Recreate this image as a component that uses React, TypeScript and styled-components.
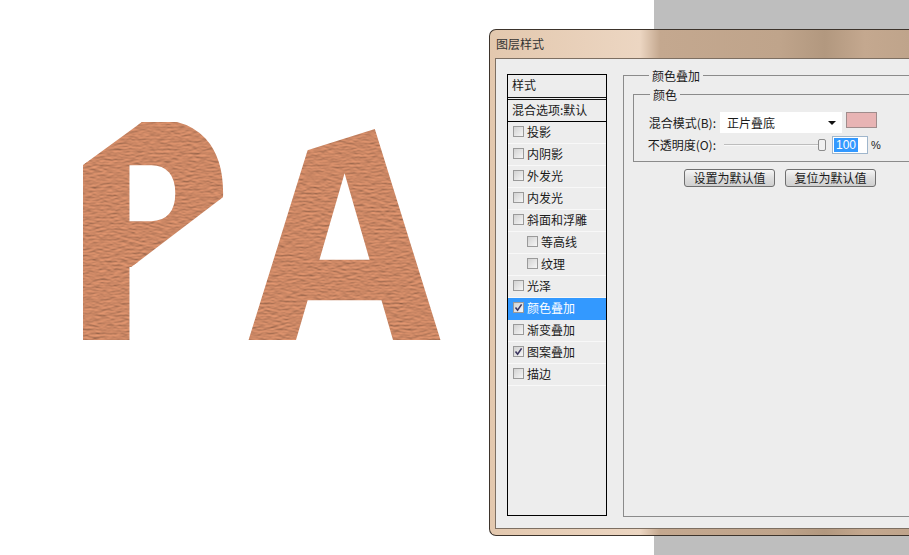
import React from 'react';
import styled, { createGlobalStyle } from 'styled-components';

type LayerStyle = {
  label: string;
  indent?: boolean;
  checked?: boolean;
  active?: boolean;
};

const layerStyles: LayerStyle[] = [
  { label: '投影' },
  { label: '内阴影' },
  { label: '外发光' },
  { label: '内发光' },
  { label: '斜面和浮雕' },
  { label: '等高线', indent: true },
  { label: '纹理', indent: true },
  { label: '光泽' },
  { label: '颜色叠加', checked: true, active: true },
  { label: '渐变叠加' },
  { label: '图案叠加', checked: true },
  { label: '描边' },
];

const GlobalStyle = createGlobalStyle`
  html, body {
    margin: 0;
    padding: 0;
    height: 100%;
    overflow: hidden;
  }
`;

const Page = styled.div`
  display: flex;
  width: 909px;
  height: 555px;
  overflow: hidden;
  background: linear-gradient(to right, #fff 654px, #bebebe 654px);
  font-family: 'Noto Sans CJK SC', 'Liberation Sans', sans-serif;
  font-size: 12px;
  color: #1a1a1a;
`;

const Artwork = styled.svg`
  flex: 0 0 489px;
  width: 489px;
  height: 555px;
  background: #fff;
`;

const BigLetter = styled.text<{ $weight?: number }>`
  font-family: 'DejaVu Sans', sans-serif;
  font-weight: 700;
  font-size: 299px;
  fill: #000;
  stroke: #000;
  stroke-width: ${(p) => p.$weight ?? 0}px;
`;

const Dialog = styled.div`
  flex: 0 0 440px;
  display: flex;
  flex-direction: column;
  height: 507px;
  margin-top: 29px;
  box-sizing: border-box;
  border: 1px solid #3d342c;
  border-right: 0;
  border-radius: 7px 0 0 7px;
  background: linear-gradient(
    to right,
    #e3c8ae 0,
    #ecd6c2 150px,
    #c4a88f 170px,
    #bfa48b 290px,
    #b2987f 335px,
    #c4a88f 375px,
    #bfa48b 420px
  );
`;

const TitleBar = styled.div`
  flex: 0 0 28px;
  display: flex;
  align-items: center;
  box-sizing: border-box;
  padding: 0 0 2px 6px;
  color: #333;
`;

const DialogBody = styled.div`
  flex: 1;
  display: flex;
  align-items: flex-start;
  gap: 16px;
  margin: 0 0 6px 5px;
  padding: 8px 0 0 11px;
  border: 1px solid #7d6f62;
  border-right: 0;
  background: #ededed;
  overflow: hidden;
`;

const StyleList = styled.div`
  flex: 0 0 100px;
  box-sizing: border-box;
  height: 442px;
  margin-top: 7px;
  border: 1px solid #000;
`;

const ListHeader = styled.div`
  box-sizing: border-box;
  height: 25px;
  padding-left: 4px;
  line-height: 20px;
  border-bottom: 3px double #111;
`;

const BlendRow = styled.div`
  box-sizing: border-box;
  height: 22px;
  padding-left: 4px;
  line-height: 20px;
  white-space: nowrap;
  border-bottom: 1px solid #000;
`;

const StyleRow = styled.div<{ $indent?: boolean; $active?: boolean }>`
  box-sizing: border-box;
  display: flex;
  align-items: center;
  gap: 3px;
  height: 22px;
  padding: 0 0 2px ${(p) => (p.$indent ? 19 : 5)}px;
  border-bottom: 1px solid ${(p) => (p.$active ? '#3399ff' : '#f8f8f8')};
  background: ${(p) => (p.$active ? '#3399ff' : 'transparent')};
  color: ${(p) => (p.$active ? '#fff' : '#1a1a1a')};
`;

const CheckBox = styled.span`
  flex: 0 0 11px;
  display: flex;
  align-items: center;
  justify-content: center;
  box-sizing: border-box;
  width: 11px;
  height: 11px;
  border: 1px solid #9a9a9a;
  background: linear-gradient(135deg, #d2d2d2, #f6f6f6);
`;

const Group = styled.fieldset<{ $width: number }>`
  box-sizing: border-box;
  width: ${(p) => p.$width}px;
  min-width: 0;
  margin: 0;
  border: 1px solid #8b8b8b;
  border-right: 0;
`;

const OuterGroup = styled(Group)`
  flex: 0 0 auto;
  height: 450px;
  padding: 3px 0 0 9px;
`;

const InnerGroup = styled(Group)`
  height: 76px;
  padding: 10px 0 0 0;
`;

const GroupTitle = styled.legend`
  margin-left: 16px;
  padding: 0 3px;
  height: 16px;
  line-height: 18px;
`;

const FormRow = styled.div<{ $height: number }>`
  display: flex;
  align-items: center;
  height: ${(p) => p.$height}px;
  margin-bottom: 2px;
`;

const FieldLabel = styled.span`
  flex: 0 0 82px;
  text-align: right;
  white-space: nowrap;
  margin-right: 4px;
`;

const SelectBox = styled.div`
  display: flex;
  align-items: center;
  justify-content: space-between;
  box-sizing: border-box;
  width: 122px;
  height: 21px;
  padding: 0 6px 0 7px;
  background: #fff;
`;

const SelectArrow = styled.span`
  width: 0;
  height: 0;
  border-left: 4px solid transparent;
  border-right: 4px solid transparent;
  border-top: 4px solid #111;
`;

const Swatch = styled.span`
  align-self: flex-start;
  box-sizing: border-box;
  width: 31px;
  height: 16px;
  margin-left: 4px;
  border: 1px solid #a08c8c;
  background: #e8b4b4;
`;

const SliderTrack = styled.div`
  position: relative;
  flex: 0 0 102px;
  height: 2px;
  margin: 0 6px 0 4px;
  background: linear-gradient(#bdbdbd 50%, #f8f8f8 50%);
`;

const SliderThumb = styled.span`
  position: absolute;
  right: 0;
  top: -5px;
  box-sizing: border-box;
  width: 8px;
  height: 12px;
  border: 1px solid #8c8c8c;
  border-radius: 2px;
  background: #f0f0f0;
`;

const NumberBox = styled.div`
  box-sizing: border-box;
  width: 36px;
  height: 18px;
  padding: 1px 0 0 1px;
  border: 1px solid #9fb6cc;
  background: #fff;
  font-family: 'Liberation Sans', sans-serif;
  line-height: 14px;
`;

const Selected = styled.span`
  display: inline-block;
  padding: 0 2px;
  background: #3399ff;
  color: #fff;
`;

const Percent = styled.span`
  margin-left: 3px;
  font-family: 'Liberation Sans', sans-serif;
  font-size: 11px;
`;

const ButtonRow = styled.div`
  display: flex;
  gap: 10px;
  margin: 7px 0 0 51px;
`;

const DefaultButton = styled.button`
  box-sizing: border-box;
  width: 91px;
  height: 18px;
  padding: 0;
  border: 1px solid #6f6f6f;
  border-radius: 3px;
  background: linear-gradient(#f6f6f6, #dedede 50%, #cfcfcf);
  font: inherit;
  line-height: 14px;
  color: #1a1a1a;
`;

const CheckMark = () => (
  <svg width="9" height="9" viewBox="0 0 9 9">
    <path d="M1.5 4.5 L3.6 7.2 L7.6 1.4" fill="none" stroke="#3b3560" strokeWidth="1.6" />
  </svg>
);

const PaperLetters = () => (
  <Artwork viewBox="0 0 489 555">
    <defs>
      <filter
        id="paper"
        filterUnits="userSpaceOnUse"
        x="0"
        y="0"
        width="489"
        height="555"
        colorInterpolationFilters="sRGB"
      >
        <feTurbulence type="fractalNoise" baseFrequency="0.14 0.5" numOctaves="4" seed="11" result="grain" />
        <feDiffuseLighting in="grain" surfaceScale="0.6" lightingColor="#eb9c74" result="lit">
          <feDistantLight azimuth="90" elevation="60" />
        </feDiffuseLighting>
        <feComposite in="lit" in2="SourceAlpha" operator="in" />
      </filter>
      <clipPath id="cut-p">
        <polygon points="83,165 142,122 260,122 260,169 130,268 130,340 83,340" />
      </clipPath>
      <clipPath id="cut-a">
        <polygon points="240,340 240,169 305,151 378,128 450,110 450,340" />
      </clipPath>
    </defs>
    <g filter="url(#paper)">
      <g clipPath="url(#cut-p)">
        <BigLetter transform="translate(83 340) scale(0.76 1)" x="-25" y="0" $weight={5}>
          P
        </BigLetter>
      </g>
      <g clipPath="url(#cut-a)">
        <BigLetter transform="translate(249 340) scale(0.84 1)" x="-2" y="0">
          A
        </BigLetter>
      </g>
    </g>
  </Artwork>
);

const App: React.FC = () => {
  return (
    <Page>
      <GlobalStyle />
      <PaperLetters />
      <Dialog>
        <TitleBar>图层样式</TitleBar>
        <DialogBody>
          <StyleList>
            <ListHeader>样式</ListHeader>
            <BlendRow>混合选项:默认</BlendRow>
            {layerStyles.map((item) => (
              <StyleRow key={item.label} $indent={item.indent} $active={item.active}>
                <CheckBox>{item.checked && <CheckMark />}</CheckBox>
                {item.label}
              </StyleRow>
            ))}
          </StyleList>
          <OuterGroup $width={330}>
            <GroupTitle>颜色叠加</GroupTitle>
            <InnerGroup $width={320}>
              <GroupTitle>颜色</GroupTitle>
              <FormRow $height={21}>
                <FieldLabel>混合模式(B):</FieldLabel>
                <SelectBox>
                  正片叠底
                  <SelectArrow />
                </SelectBox>
                <Swatch />
              </FormRow>
              <FormRow $height={19}>
                <FieldLabel>不透明度(O):</FieldLabel>
                <SliderTrack>
                  <SliderThumb />
                </SliderTrack>
                <NumberBox>
                  <Selected>100</Selected>
                </NumberBox>
                <Percent>%</Percent>
              </FormRow>
            </InnerGroup>
            <ButtonRow>
              <DefaultButton>设置为默认值</DefaultButton>
              <DefaultButton>复位为默认值</DefaultButton>
            </ButtonRow>
          </OuterGroup>
        </DialogBody>
      </Dialog>
    </Page>
  );
};

export default App;
